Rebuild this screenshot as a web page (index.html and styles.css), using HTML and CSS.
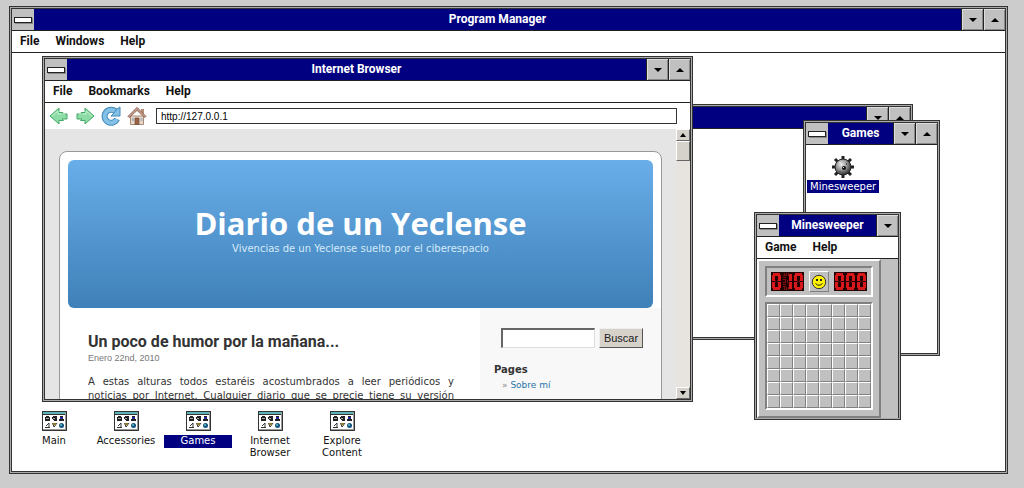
FILE: index.html
```html
<!DOCTYPE html>
<html lang="en">
<head>
<meta charset="utf-8">
<title>Program Manager</title>
<link rel="stylesheet" href="styles.css">
</head>
<body>
<svg class="defs" aria-hidden="true">
  <symbol id="group" viewBox="0 0 25 20">
    <path fill="#333" d="M0 0h25v20H0z"/><path fill="#fff" d="M1 1h22v17H1z"/>
    <path fill="#5cb5b8" d="M1 1h22v2H1z"/><path fill="#333" d="M1 3h22v1H1z"/>
    <path fill="#999" d="M23 1h1v18H1v-1h22z"/>
    <path fill="#222" d="M4 5h3v1h1v4H3V6h1zM11 5h4v5h-3V9h-1V8h-1V6h1zM18 5h3v3h1v2h-5V8h1z"/>
    <path fill="#22229a" d="M18 6h3v2h-3z"/><path fill="#aaa" d="M4 7h3v1H4zM11 7h2v1h-2z"/>
    <path fill="none" stroke="#333" d="M3 16.500h5M4 15l3-3v4M10.500 12l1.500 4M12 16l3-4"/>
    <path fill="#887a28" d="M11 12h3v2h-3z"/><circle cx="19.500" cy="14.500" r="2.500" fill="#155280"/><path fill="#47a2b3" d="M18 13h2v2h-2z"/>
  </symbol>
  <symbol id="zero" viewBox="0 0 11 19">
    <path stroke="#d81818" stroke-width="3" fill="none" d="M2 2.500h7M2.500 3v6M8.500 3v6M2.500 10v6M8.500 10v6M2 16.500h7"/>
    <path stroke="#711" stroke-width="2" stroke-dasharray="1 1" d="M4 9.500h4"/>
  </symbol>
  <symbol id="one" viewBox="0 0 11 19">
    <path stroke="#d81818" stroke-width="3" fill="none" d="M8.500 2v7M8.500 10v7"/>
    <path stroke="#711" stroke-width="3" stroke-dasharray="1 1" fill="none" d="M2 2.500h5M2.500 3v6M2.500 10v6M2 16.500h5M3 9.500h4"/>
  </symbol>
</svg>

<section class="window main">
  <header class="titlebar">
    <button class="sys" aria-label="Control menu"></button><h1 class="title">Program Manager</h1>
    <button class="size down" aria-label="Minimize"></button><button class="size up" aria-label="Maximize"></button>
  </header>
  <nav class="menu"><button>File</button><button>Windows</button><button>Help</button></nav>
  <div class="shortcuts">
    <button class="shortcut"><svg><use href="#group"/></svg><span>Main</span></button>
    <button class="shortcut"><svg><use href="#group"/></svg><span>Accessories</span></button>
    <button class="shortcut selected"><svg><use href="#group"/></svg><span>Games</span></button>
    <button class="shortcut"><svg><use href="#group"/></svg><span>Internet Browser</span></button>
    <button class="shortcut"><svg><use href="#group"/></svg><span>Explore Content</span></button>
  </div>
</section>

<section class="window back">
  <header class="titlebar">
    <button class="sys" aria-label="Control menu"></button><span class="title"></span>
    <button class="size down" aria-label="Minimize"></button><button class="size up" aria-label="Maximize"></button>
  </header>
</section>

<section class="window games">
  <header class="titlebar">
    <button class="sys" aria-label="Control menu"></button><h2 class="title">Games</h2>
    <button class="size down" aria-label="Minimize"></button><button class="size up" aria-label="Maximize"></button>
  </header>
  <button class="program">
    <svg viewBox="0 0 24 24">
      <defs><radialGradient id="ball" cx=".4" cy=".35" r=".65"><stop offset="0" stop-color="#eee"/><stop offset=".5" stop-color="#999"/><stop offset="1" stop-color="#333"/></radialGradient></defs>
      <path stroke="#222" stroke-width="3" d="M12 1v22M1 12h22M4 4l16 16M20 4L4 20"/>
      <circle cx="12" cy="12" r="8" fill="url(#ball)" stroke="#222"/>
      <circle cx="13" cy="13" r="2" fill="#111"/><path fill="#ddd" d="M12 12h1v1h-1zM8 7h2v2H8z"/>
      <path fill="#555" d="M8 16h2v1H8zM15 8h1v2h-1zM11 17h3v1h-3z"/>
    </svg>
    <span>Minesweeper</span>
  </button>
</section>

<section class="window browser">
  <header class="titlebar">
    <button class="sys" aria-label="Control menu"></button><h2 class="title">Internet Browser</h2>
    <button class="size down" aria-label="Minimize"></button><button class="size up" aria-label="Maximize"></button>
  </header>
  <nav class="menu"><button>File</button><button>Bookmarks</button><button>Help</button></nav>
  <div class="toolbar">
    <button aria-label="Back"><svg viewBox="0 0 20 20"><path d="M1 10l9-8v4.500h4L12.500 8H18v5h-5l1.500 1.500H10V18z" fill="#8ddca5" stroke="#42a866"/><path d="M3 10l6-5v3h7" fill="none" stroke="#c4f2d0"/></svg></button>
    <button aria-label="Forward"><svg viewBox="0 0 20 20"><path d="M19 10l-9-8v4.500H6L7.500 8H2v5h5l-1.500 1.500H10V18z" fill="#8ddca5" stroke="#42a866"/><path d="M17 10l-6-5v3H4" fill="none" stroke="#c4f2d0"/></svg></button>
    <button aria-label="Reload"><svg viewBox="0 0 20 20"><path d="M16 13a6.500 6.500 0 1 1-1-7" fill="none" stroke="#4189b8" stroke-width="6"/><path d="M16 13a6.500 6.500 0 1 1-1-7" fill="none" stroke="#83c2e6" stroke-width="4"/><path d="M19 1v9h-9l3-3 3-4z" fill="#83c2e6" stroke="#4189b8"/></svg></button>
    <button aria-label="Home"><svg viewBox="0 0 20 20"><path d="M3.500 10h13v8.500h-13z" fill="#ead8ca" stroke="#a78978"/><path d="M14 3h3v5h-3z" fill="#b58d79"/><path d="M.8 10.500L10 1.200l9.200 9.300-1.700 1L10 4.500l-7.500 7z" fill="#bd9482" stroke="#8c6558" stroke-width=".7"/><path d="M8 12h4v6.500H8z" fill="#9a6042" stroke="#705040" stroke-width=".7"/><path d="M5 12h2v3H5zM13.500 12h2v3h-2z" fill="#a9b4bd"/></svg></button>
    <input type="text" aria-label="Address" value="http://127.0.0.1">
  </div>
  <div class="viewport">
    <div class="page">
      <div class="card">
        <header class="banner"><h2>Diario de un Yeclense</h2><p>Vivencias de un Yeclense suelto por el ciberespacio</p></header>
        <div class="columns" lang="es">
          <article class="post">
            <h3>Un poco de humor por la mañana...</h3>
            <time datetime="2010-01-22">Enero 22nd, 2010</time>
            <p>A estas alturas todos estaréis acostumbrados a leer periódicos y<br>noticias por Internet. Cualquier diario que se precie tiene su versión</p>
          </article>
          <aside class="side">
            <form class="search"><input type="text" aria-label="Buscar"><button type="button">Buscar</button></form>
            <h4>Pages</h4>
            <ul><li><a href="#">Sobre mí</a></li></ul>
          </aside>
        </div>
      </div>
    </div>
    <div class="scroll"><button class="up" aria-label="Scroll up"></button><div class="thumb"></div><button class="down" aria-label="Scroll down"></button></div>
  </div>
</section>

<section class="window mines">
  <header class="titlebar">
    <button class="sys" aria-label="Control menu"></button><h2 class="title">Minesweeper</h2>
    <button class="size down" aria-label="Minimize"></button>
  </header>
  <nav class="menu"><button>Game</button><button>Help</button></nav>
  <div class="felt">
    <div class="board">
      <div class="status">
        <div class="led" role="img" aria-label="Mines left"><svg><use href="#zero"/></svg><svg><use href="#one"/></svg><svg><use href="#zero"/></svg></div>
        <button class="face" aria-label="New game"><svg viewBox="0 0 16 16"><circle cx="8" cy="8" r="6.700" fill="#fff200" stroke="#333"/><path fill="#222" d="M5 5h2v2H5zM9 5h2v2H9z"/><path d="M4.500 9.500q3.500 3.500 7 0" fill="none" stroke="#222"/></svg></button>
        <div class="led" role="img" aria-label="Seconds"><svg><use href="#zero"/></svg><svg><use href="#zero"/></svg><svg><use href="#zero"/></svg></div>
      </div>
      <div class="field" id="field"></div>
    </div>
  </div>
</section>
<script src="script.js"></script>
</body>
</html>
```
FILE: styles.css
```css
* { box-sizing: border-box; }
body { margin: 0; height: 100vh; position: relative; overflow: hidden; background: #ccc; color: #111; font-family: "DejaVu Sans", Verdana, sans-serif; font-size: 10px; }
h1, h2, h3, h4, p, ul { margin: 0; padding: 0; }
button { margin: 0; padding: 0; border: 0; border-radius: 0; background: none; color: inherit; font: inherit; }
svg { display: block; }
.defs { position: absolute; width: 0; height: 0; }

.window { position: absolute; display: flex; flex-direction: column; padding: 2px; background: #fff; border: 1px solid #333; box-shadow: inset 0 0 0 1px #aaa, inset 0 0 0 2px #333; }
.main { left: 9px; top: 6px; right: 16px; bottom: 14px; }
.back { left: 500px; top: 104px; width: 413px; height: 236px; }
.games { left: 803px; top: 120px; width: 137px; height: 236px; }
.browser { left: 42px; top: 56px; width: 651px; height: 346px; }
.mines { left: 754px; top: 212px; width: 147px; height: 208px; }

.titlebar { display: flex; flex: none; height: 22px; background: navy; border-bottom: 1px solid #222; }
.title { flex: 1; color: #fff; text-align: center; font: bold 12px/21px Roboto, Arial, sans-serif; }
.sys, .size { width: 22px; background: #c0c0c0; display: flex; align-items: center; justify-content: center; }
.sys::before { content: ""; width: 16px; height: 4px; border: 1px solid #222; background: #fff; box-shadow: 1px 1px #888; }
.size { border-left: 1px solid #222; box-shadow: inset 1px 1px #ddd, inset -1px -1px #888; }
.up::before, .down::before { content: ""; border: 4px solid transparent; }
.up::before { border-top: 0; border-bottom-color: #000; }
.down::before { border-bottom: 0; border-top-color: #000; }

.menu { display: flex; flex: none; gap: 16px; height: 22px; padding: 0 8px; background: #fff; border-bottom: 1px solid #222; font: bold 12px/21px Roboto, Arial, sans-serif; }

.shortcuts { display: flex; align-items: flex-start; gap: 4px; margin-top: auto; padding: 0 8px 11px; }
.shortcut { width: 68px; line-height: 12px; text-align: center; }
.shortcut svg { width: 25px; height: 20px; margin: 0 auto 4px; }
.shortcut span { display: block; padding-bottom: 1px; }
.shortcut.selected span { background: navy; color: #fff; }

.program { align-self: flex-start; margin: 10px 1px; line-height: 13px; }
.program svg { width: 24px; height: 24px; margin: 0 auto 1px; }
.program span { display: block; padding: 0 3px; background: navy; color: #fff; }

.toolbar { display: flex; flex: none; align-items: center; gap: 6px; height: 26px; padding: 0 13px 0 4px; }
.toolbar svg { width: 20px; height: 20px; }
.toolbar input { flex: 1; min-width: 0; height: 16px; margin-left: 3px; padding: 0 4px; border: 1px solid #333; font: 10px "Liberation Sans", Arial, sans-serif; }

.viewport { display: flex; flex: 1; min-height: 0; background: #e5e5e5; }
.page { flex: 1; overflow: hidden; padding: 22px 14px 0; }
.card { min-height: 300px; background: #fff; border: 1px solid #999; border-radius: 8px 8px 0 0; padding-top: 8px; }
.banner { height: 148px; margin: 0 8px; padding-top: 44px; border-radius: 6px; background: linear-gradient(#69aee9, #3f80b8); color: #fff; text-align: center; }
.banner h2 { font: bold 31px/38px "Open Sans", "Trebuchet MS", sans-serif; }
.banner p { line-height: 14px; color: #d5eaf8; }
.columns { display: flex; }
.post { flex: 1; padding: 24px 26px 0 28px; color: #333; }
.post h3 { font: bold 16px/20px Roboto, "Trebuchet MS", sans-serif; white-space: nowrap; }
.post time { display: block; color: #777; font: 9px/12px "Liberation Sans", Arial, sans-serif; }
.post p { margin-top: 11px; line-height: 14px; text-align: justify; text-align-last: justify; }
.side { width: 181px; min-height: 150px; padding: 20px 14px 0; background: #f8f8f8; }
.search { display: flex; gap: 4px; padding-left: 7px; }
.search input { width: 94px; height: 20px; border: 1px solid #ddd; border-top: 2px solid #666; border-left: 2px solid #666; background: #fff; }
.search button { width: 44px; height: 20px; background: #d6d2ca; border: 1px solid #eee; border-right-color: #555; border-bottom-color: #555; font: 11px "Liberation Sans", Arial, sans-serif; color: #222; }
.side h4 { margin-top: 15px; font-size: 10px; line-height: 14px; color: #333; }
.side ul { list-style: none; padding-left: 8px; line-height: 16px; font-size: 9px; }
.side li::before { content: "» "; color: #888; }
.side a { color: #2874a6; text-decoration: none; }

.scroll { display: flex; flex-direction: column; width: 14px; background: #e7e4df; }
.scroll button, .thumb { height: 12px; background: #d5d2cb; border: 1px solid #fff; border-right-color: #666; border-bottom-color: #666; display: flex; align-items: center; justify-content: center; }
.scroll .thumb { height: 20px; }
.scroll .down { margin-top: auto; }
.scroll button::before { border-left-width: 3px; border-right-width: 3px; }

.felt { display: flex; flex: 1; background: #c0c0c0; }
.board { width: 124px; padding: 5px 6px 6px 6px; border: 2px solid #fff; border-right-color: #808080; border-bottom-color: #808080; }
.status, .field { border: 2px solid #808080; border-right-color: #fff; border-bottom-color: #fff; }
.status { display: flex; align-items: center; justify-content: space-between; height: 31px; padding: 0 4px; }
.led { display: flex; width: 33px; height: 19px; background: #200; }
.led svg { width: 11px; height: 19px; }
.face { width: 20px; height: 21px; display: flex; align-items: center; justify-content: center; border: 1px solid #fff; border-right-color: #808080; border-bottom-color: #808080; }
.face svg { width: 16px; height: 16px; }
.field { display: grid; grid-template-columns: repeat(8, 1fr); margin-top: 5px; }
.field button { height: 13px; border: 1px solid #fff; border-right-color: #808080; border-bottom-color: #808080; }
```
FILE: script.js
```js
const field = document.getElementById("field");
for (let i = 0; i < 64; i++) {
  const cell = document.createElement("button");
  cell.setAttribute("aria-label", `Row ${Math.floor(i / 8) + 1}, column ${i % 8 + 1}`);
  field.append(cell);
}
```
